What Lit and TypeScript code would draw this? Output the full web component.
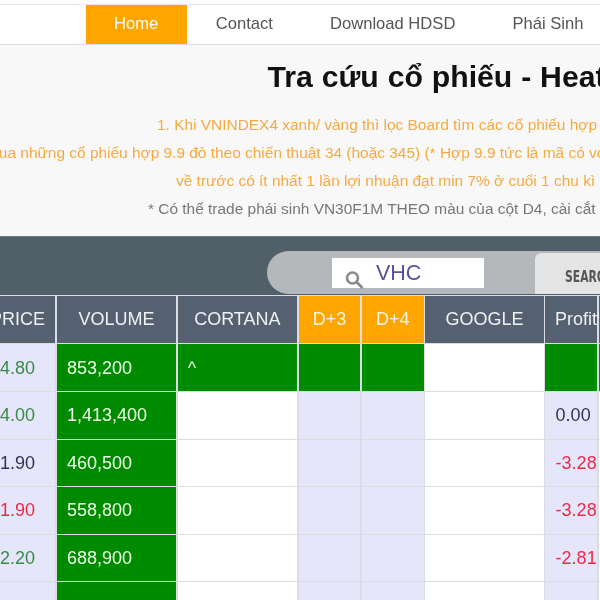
import { LitElement, html, css } from "lit";
import { customElement } from "lit/decorators.js";

type Row = { price: string; pc: string; vol: string; cort: string; profit: string; prc: string; hot?: boolean };
const rows: Row[] = [
  { price: "24.80", pc: "up", vol: "853,200", cort: "^", profit: "", prc: "", hot: true },
  { price: "24.00", pc: "up", vol: "1,413,400", cort: "", profit: "0.00", prc: "flat" },
  { price: "21.90", pc: "flat", vol: "460,500", cort: "", profit: "-3.28", prc: "down" },
  { price: "21.90", pc: "down", vol: "558,800", cort: "", profit: "-3.28", prc: "down" },
  { price: "22.20", pc: "up", vol: "688,900", cort: "", profit: "-2.81", prc: "down" },
  { price: "", pc: "", vol: "", cort: "", profit: "", prc: "" },
];

@customElement("app-root")
export class AppRoot extends LitElement {
  static styles = css`
    :host { display: block; width: 600px; height: 600px; overflow: hidden; background: #fff;
      font-family: "Liberation Sans", Arial, sans-serif; filter: blur(0.3px); }
    .top { height: 4px; background: #fff; border-bottom: 1px solid #e7e7e7; }
    .nav { display: flex; height: 39px; padding-left: 86px; background: #fff; border-bottom: 1px solid #dedede; white-space: nowrap; }
    .nav a { display: flex; align-items: center; padding: 0 28.5px 2px; color: #555; font-size: 16.6px; }
    .nav a.on { background: #ffa500; color: #fff; padding: 0 29px 2px 28px; }
    .intro { height: 191px; background: #f8f8f8; overflow: hidden; white-space: nowrap; }
    h1 { margin: 14px 0 0 267.5px; font-size: 30.2px; word-spacing: 0.5px; line-height: 36px; font-weight: 700; color: #111; }
    .notes { margin-top: 16px; font-size: 15.45px; line-height: 28px; color: #f7a941; }
    .notes div { height: 28px; }
    .l1 { margin-left: 157px; }
    .l2 { margin-left: -14px; }
    .l3 { margin-left: 176px; }
    .l4 { margin-left: 148px; color: #777; }
    .bar { height: 59px; border-top: 1px solid #6d7780; background: #515f69; display: flex; align-items: flex-end; padding: 0 0 1px 267px; box-sizing: border-box; }
    .pill { flex: 1; height: 43px; background: #b5b8ba; border-radius: 22px 0 0 22px; display: flex; align-items: flex-start; padding: 7px 0 0 65px; box-sizing: border-box; }
    .input { position: relative; flex: none; width: 152px; height: 30px; background: #fff; color: #5b50a0; font-size: 21.5px; line-height: 30px; padding-left: 44px; box-sizing: border-box; }
    .input svg { position: absolute; left: 12px; top: 11px; }
    .btn { flex: 1; margin: -5px 0 0 51px; height: 41px; background: #e4e4e4; border-radius: 6px 0 0 0; color: #555; font: 700 15px "DejaVu Sans Condensed", "DejaVu Sans", sans-serif; display: flex; align-items: center; padding: 6px 0 0 30px; box-sizing: border-box; white-space: nowrap; overflow: hidden; }
    .btn span { display: block; transform: scaleX(0.8); transform-origin: left center; }
    .grid { display: grid; margin-left: -18px; width: 700px; background: #dcdde3; padding-top: 1px;
      grid-template-columns: 73.4px 119.2px 119.2px 61.8px 61.8px 118.2px 52px 60px;
      grid-auto-rows: 46.6px; grid-template-rows: 47.4px; column-gap: 1.6px; row-gap: 1px; }
    .th { background: #556070; color: #eef1f3; font-size: 18px; display: flex; align-items: center; justify-content: center; white-space: nowrap; }
    .th.o { background: #ffa500; color: #fff6e0; }
    .th.pr { justify-content: flex-start; padding-left: 8px; }
    .th.pf { justify-content: flex-start; padding-left: 10px; }
    .td { display: flex; align-items: center; padding: 1px 0 0 10px; font-size: 18px; background: #fff; color: #333; white-space: nowrap; }
    .td.lav { background: #e6e6fa; }
    .td.g { background: #008a00; color: #ecffe6; }
    .td.price { padding-left: 8px; }
    .up { color: #3a8b4a; }
    .flat { color: #33335a; }
    .down { color: #ee2a48; }
    .td.prof { padding-left: 10.5px; }
  `;

  render() {
    return html`
      <div class="top"></div>
      <nav class="nav">
        <a class="on">Home</a><a>Contact</a><a>Download HDSD</a><a>Phái Sinh</a>
      </nav>
      <section class="intro">
        <h1>Tra cứu cổ phiếu - Heatmap</h1>
        <div class="notes">
          <div class="l1">1. Khi VNINDEX4 xanh/ vàng thì lọc Board tìm các cổ phiếu hợp 9.9</div>
          <div class="l2">Mua những cổ phiếu hợp 9.9 đỏ theo chiến thuật 34 (hoặc 345) (* Hợp 9.9 tức là mã có vol</div>
          <div class="l3">về trước có ít nhất 1 lần lợi nhuận đạt min 7% ở cuối 1 chu kì</div>
          <div class="l4">* Có thể trade phái sinh VN30F1M THEO màu của cột D4, cài cắt lỗ</div>
        </div>
      </section>
      <div class="bar">
        <div class="pill">
          <div class="input">VHC
            <svg width="22" height="22" viewBox="0 0 22 22" fill="none" stroke="#8a8a8a">
              <circle cx="8.5" cy="9" r="5.5" stroke-width="2.6"></circle>
              <path d="M12.5 13l6 6" stroke-width="2.6"></path>
            </svg>
          </div>
          <div class="btn"><span>SEARCH</span></div>
        </div>
      </div>
      <div class="grid">
        <div class="th pr">PRICE</div>
        <div class="th">VOLUME</div>
        <div class="th">CORTANA</div>
        <div class="th o">D+3</div>
        <div class="th o">D+4</div>
        <div class="th">GOOGLE</div>
        <div class="th pf">Profit%</div>
        <div class="th"></div>
        ${rows.map(
          (r) => html`
            <div class="td lav price ${r.pc}">${r.price}</div>
            <div class="td g">${r.vol}</div>
            <div class="td ${r.hot ? "g" : ""}">${r.cort}</div>
            <div class="td ${r.hot ? "g" : "lav"}"></div>
            <div class="td ${r.hot ? "g" : "lav"}"></div>
            <div class="td"></div>
            <div class="td prof ${r.hot ? "g" : "lav"} ${r.prc}">${r.profit}</div>
            <div class="td ${r.hot ? "g" : ""}"></div>
          `
        )}
      </div>
    `;
  }
}
